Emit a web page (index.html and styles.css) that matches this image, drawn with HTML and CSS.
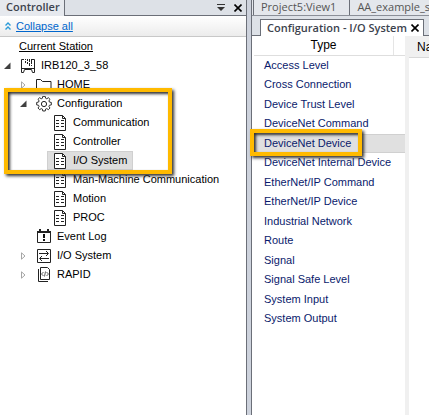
FILE: index.html
```
<!DOCTYPE html>
<html lang="en">
<head>
<meta charset="utf-8">
<title>Configuration - I/O System</title>
<link rel="stylesheet" href="styles.css">
</head>
<body>
<svg class="defs" aria-hidden="true">
  <symbol id="open" viewBox="0 0 7 7"><path d="M6.500 0v6.500H0z" fill="#404040"/></symbol>
  <symbol id="closed" viewBox="0 0 7 8"><path d="M1.500 .8v6.400L5 4z" fill="#fff" stroke="#a6a6a6"/></symbol>
  <symbol id="doc" viewBox="0 0 14 16"><path d="M1.500 .5h8l3 3v12h-11z" fill="#fff" stroke="#222"/><path d="M9.500 .5v3h3M3 5.500h3M8 5.500h3M3 8.500h3M8 8.500h3M3 11.500h3M8 11.500h3" fill="none" stroke="#222"/></symbol>
</svg>
<div class="app">
  <aside class="side">
    <header class="side-head">
      <h2 class="side-tab">Controller</h2>
      <button class="tool" aria-label="Panel options"><svg width="8" height="9" viewBox="0 0 8 9"><path d="M0 1.500h8" stroke="#333"/><path d="M0 4h8L4 8z" fill="#333"/></svg></button>
      <button class="tool" aria-label="Close panel"><svg width="8" height="8" viewBox="0 0 8 8"><path d="M.5 .5l7 7M7.500 .5l-7 7" stroke="#000" stroke-width="1.600"/></svg></button>
    </header>
    <div class="side-bar">
      <svg width="6" height="9" viewBox="0 0 6 9"><path d="M.5 3.500L3 1l2.500 2.500M.5 7.500L3 5l2.500 2.500" fill="none" stroke="#2a9bd8" stroke-width="1.400"/></svg>
      <a href="#collapse">Collapse all</a>
    </div>
    <div class="tree">
      <div class="station">Current Station</div>
      <div class="row"><svg class="arrow"><use href="#open"/></svg><svg class="icon" viewBox="0 0 16 16"><path d="M4 1.500H1.500v13h2l1-3h7l1 3h2v-13H12M1.500 10.500h13" fill="none" stroke="#222"/><path d="M5.500 1v1M5.500 3v2M7.500 1v2M7.500 4v2M9.500 1v3M9.500 5v3M11.500 1v5M11.500 7v1" stroke="#222"/></svg><span>IRB120_3_58</span></div>
      <div class="row child"><svg class="arrow"><use href="#closed"/></svg><svg class="icon" viewBox="0 0 16 16"><path d="M.5 13.500v-11h4l2 2h8.500v9z" fill="#fff" stroke="#222"/></svg><span>HOME</span></div>
      <div class="group">
        <div class="row child"><svg class="arrow"><use href="#open"/></svg><svg class="icon" viewBox="0 0 16 16"><path d="M6.700 .8h2.600l.4 2 1.200.5 1.700-1.100 1.700 1.700-1.100 1.700.5 1.200 2 .4v2.600l-2 .4-.5 1.200 1.100 1.700-1.700 1.700-1.700-1.100-1.200.5-.4 2H6.700l-.4-2-1.200-.5-1.700 1.100-1.700-1.700 1.100-1.700-.5-1.200-2-.4V7.200l2-.4.500-1.200-1.100-1.700 1.700-1.700 1.700 1.100 1.200-.5z" transform="translate(.4 -.4) scale(.95)" fill="none" stroke="#222"/><circle cx="8" cy="8" r="2.600" fill="none" stroke="#222"/></svg><span>Configuration</span></div>
        <div class="row leaf"><svg class="page"><use href="#doc"/></svg><span>Communication</span></div>
        <div class="row leaf"><svg class="page"><use href="#doc"/></svg><span>Controller</span></div>
        <div class="row leaf"><div class="picked"><svg class="page"><use href="#doc"/></svg><span>I/O System</span></div></div>
        <div class="mark mark-tree"></div>
      </div>
      <div class="row leaf"><svg class="page"><use href="#doc"/></svg><span>Man-Machine Communication</span></div>
      <div class="row leaf"><svg class="page"><use href="#doc"/></svg><span>Motion</span></div>
      <div class="row leaf"><svg class="page"><use href="#doc"/></svg><span>PROC</span></div>
      <div class="row child"><span class="arrow"></span><svg class="icon" viewBox="0 0 16 16"><path d="M1.500 2.500h13v11h-13z" fill="#fff" stroke="#222"/><path d="M1 3h14M4 0v3M12 0v3" stroke="#222" stroke-width="2"/><path d="M8 5v4M8 10v2" stroke="#111" stroke-width="2"/></svg><span>Event Log</span></div>
      <div class="row child"><svg class="arrow"><use href="#closed"/></svg><svg class="icon" viewBox="0 0 16 16"><path d="M1.500 1.500h13v13h-13z" fill="#fff" stroke="#222"/><path d="M3 5.500h9M10 3l2.500 2.500L10 8M13 10.500H4M6 8l-2.500 2.500L6 13" fill="none" stroke="#222"/></svg><span>I/O System</span></div>
      <div class="row child"><svg class="arrow"><use href="#closed"/></svg><svg class="icon" viewBox="0 0 16 16"><path d="M4.500 .5h7l2 2v10h-9zM2.500 2v12.500H12" fill="none" stroke="#222"/><path d="M7.500 5l-2 2 2 2M10.500 5l2 2-2 2M9.500 4.500l-1 5" fill="none" stroke="#333" stroke-width=".8"/></svg><span>RAPID</span></div>
    </div>
  </aside>
  <div class="splitter"></div>
  <main class="main">
    <nav class="views"><a href="#v1">Project5:View1</a><a href="#v2">AA_example_se</a></nav>
    <div class="docs">
      <div class="doc-tab">Configuration - I/O System<button class="tool" aria-label="Close document"><svg width="8" height="8" viewBox="0 0 8 8"><path d="M.5 .5l7 7M7.500 .5l-7 7" stroke="#000" stroke-width="1.600"/></svg></button></div>
    </div>
    <div class="content">
      <section class="types">
        <div class="types-head"><span>Type</span></div>
        <ul>
          <li>Access Level</li><li>Cross Connection</li><li>Device Trust Level</li><li>DeviceNet Command</li>
          <li class="current">DeviceNet Device<div class="mark mark-type"></div></li>
          <li>DeviceNet Internal Device</li><li>EtherNet/IP Command</li><li>EtherNet/IP Device</li><li>Industrial Network</li><li>Route</li><li>Signal</li><li>Signal Safe Level</li><li>System Input</li><li>System Output</li>
        </ul>
      </section>
      <section class="names"><div class="names-head">Na</div></section>
    </div>
  </main>
</div>
</body>
</html>
```
FILE: styles.css
```
* { box-sizing: border-box; }
body {
  margin: 0;
  font: 11px/19px "Liberation Sans", Arial, sans-serif;
  color: #000;
  background: #fff;
}
.defs { position: absolute; width: 0; height: 0; }
.app { display: flex; height: 100vh; overflow: hidden; }
.tool { display: flex; padding: 0; border: 0; background: none; }

.side { flex: 0 0 246px; }
.side-head {
  display: flex;
  align-items: center;
  gap: 9px;
  height: 16px;
  padding-right: 4px;
  background: #dde1e7;
  border-bottom: 1px solid #6b6f78;
}
.side-tab {
  align-self: stretch;
  height: 16px;
  margin: 0 auto 0 0;
  padding: 0 4px 0 6px;
  font: 600 11px/14px "Open Sans", sans-serif;
  color: #3c424d;
  background: #e6e9ee;
  border-right: 1px solid #6b6f78;
}
.side-bar {
  display: flex;
  align-items: center;
  gap: 5px;
  height: 21px;
  padding: 0 5px;
  background: linear-gradient(#fff, #ececec);
  border-bottom: 1px solid #c8c8c8;
}
.side-bar a { color: #0066cc; }
.tree { white-space: nowrap; }
.station { padding-left: 19px; text-decoration: underline; }
.row { display: flex; align-items: center; height: 19px; padding-left: 4px; }
.child { padding-left: 20px; }
.leaf { padding-left: 47px; }
.row > .page { margin-left: 6px; }
.arrow { flex: none; width: 7px; height: 8px; margin-right: 9px; }
.icon { flex: none; width: 16px; height: 16px; margin-right: 5px; }
.page { flex: none; width: 14px; height: 16px; margin-right: 6px; }
.picked {
  display: flex;
  align-items: center;
  height: 19px;
  padding: 0 5px;
  background: #dedede;
  border: 1px solid #d0d0d0;
}
.group { position: relative; }
.mark {
  position: absolute;
  z-index: 2;
  border: 4px solid #ffba00;
  box-shadow: 2px 2px 3px #333, inset 2px 2px 3px #333;
  pointer-events: none;
}
.mark-tree { left: 4px; top: -6px; width: 168px; height: 86px; }
.mark-type { left: -2px; top: -6px; width: 112px; height: 27px; }

.splitter {
  flex: 0 0 6px;
  background: #cdd2dc;
  border: solid #6b6f78;
  border-width: 0 1px;
}
.main { flex: 1; min-width: 0; display: flex; flex-direction: column; }
.views {
  display: flex;
  height: 16px;
  padding-left: 1px;
  background: #e4e7ec;
  border-bottom: 1px solid #8b8f98;
}
.views a {
  padding: 0 13px 0 7px;
  font: 11px/14px "Open Sans", sans-serif;
  color: #555;
  text-decoration: none;
  border-left: 1px solid #6b6f78;
}
.docs {
  display: flex;
  align-items: flex-end;
  height: 20px;
  padding-left: 8px;
  background: #dde1e7;
  border-bottom: 1px solid #6b6f78;
}
.doc-tab {
  display: flex;
  align-items: center;
  gap: 4px;
  height: 17px;
  margin-bottom: -1px;
  padding: 0 4px 0 6px;
  font: 600 11px/16px "Open Sans", sans-serif;
  color: #3c424d;
  white-space: nowrap;
  background: #fff;
  border: 1px solid #6b6f78;
  border-bottom: 0;
}
.content { flex: 1; display: flex; }
.types { flex: 0 0 157px; border-right: 4px solid #f0f0f0; }
.types-head {
  display: flex;
  height: 20px;
  margin-left: 2px;
  font-size: 12px;
  border-bottom: 1px solid #dedede;
}
.types-head span { flex: 1; text-align: center; border-right: 1px solid #e5e5e5; margin-right: 11px; }
.types ul { margin: 0; padding: 0; list-style: none; color: #0a1a6c; }
.types li { height: 19px; padding-left: 12px; white-space: nowrap; }
.types li:nth-child(even) { height: 20px; }
.types .current { position: relative; background: #e0e0e0; border: solid #d0d0d0; border-width: 1px 0; line-height: 17px; }
.names { flex: 1; overflow: hidden; }
.names-head { height: 22px; padding: 2px 0 0 8px; font-size: 12px; background: #f0f0f0; border-bottom: 1px solid #d8d8d8; }
```
